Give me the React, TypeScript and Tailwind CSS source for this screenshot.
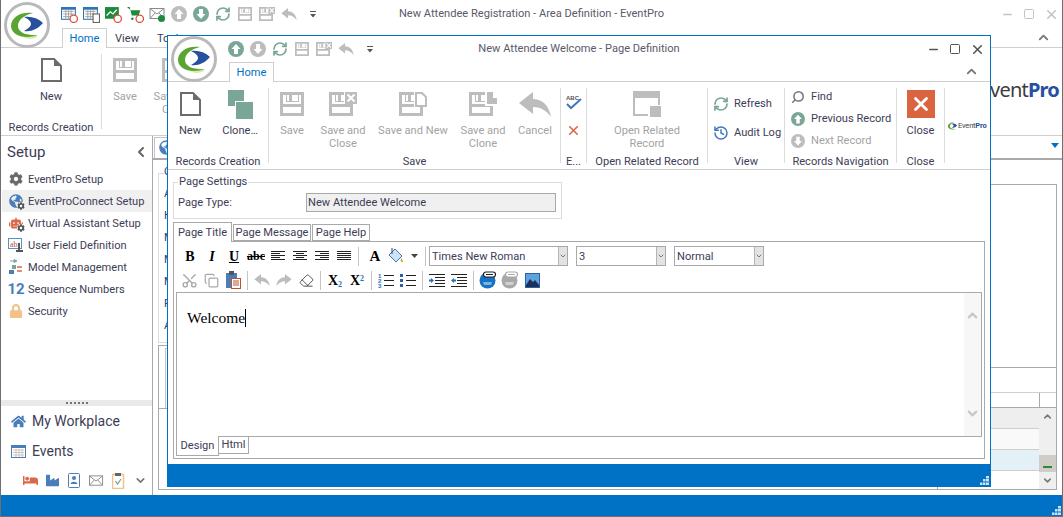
import type { ReactNode } from 'react';
import { ChevronDown, ChevronLeft, ChevronUp, Copy, Eraser, History, Minus, RefreshCw, Scissors, Search, Square, X } from 'lucide-react';
import { FaBed, FaCog, FaGlobeAmericas, FaHome, FaIndustry, FaLock, FaRobot } from 'react-icons/fa';

const TEAL = '#7aa698';
const GRAY = '#bdbdbd';

const Logo = () => (
  <svg width="46" height="46" viewBox="0 0 46 46">
    <circle cx="23" cy="23" r="21.5" fill="#fff" stroke="#b9b9b9" strokeWidth="3" />
    <path d="M15 32C21 38 28 38 33 35L33 33Z" fill="#dcebb0" />
    <path d="M29 11C16 9 7 16 7 24C7 33 20 38 34 33C24 34 14 31 14 24C14 18 20 13 29 11Z" fill="#5aa532" />
    <path d="M20 15C27 14 34 16 39 21C34 27 27 30 20 29C25 26 27 24 27 22C27 19 24 17 20 15Z" fill="#27509f" />
  </svg>
);

const ArrowCircle = ({ down, color, size = 16 }: { down?: boolean; color: string; size?: number }) => (
  <svg width={size} height={size} viewBox="0 0 16 16">
    <circle cx="8" cy="8" r="8" fill={color} />
    <path d="M8 3L12.5 8H10V13H6V8H3.5Z" fill="#fff" transform={down ? 'rotate(180 8 8)' : undefined} />
  </svg>
);

const Refresh = ({ size = 16 }: { size?: number }) => <RefreshCw size={size} color={TEAL} strokeWidth={2.6} />;

const Floppy = ({ size = 24, extra }: { size?: number; extra?: 'close' | 'new' | 'clone' }) => {
  const w = extra ? 28 : 24;
  return (
    <svg width={(size * w) / 24} height={size} viewBox={`0 0 ${w} 24`}>
      <path d="M0 0H24V24H0Z" fill={GRAY} />
      <path d="M3 3H21V12H3ZM3 15H21V21H3Z" fill="#fff" />
      <path d="M9 3H12V9H9Z" fill={GRAY} />
      <path d="M6 3H7V9H18V3H19V10H6Z" fill={GRAY} />
      {extra === 'close' && (
        <>
          <path d="M15 0H28V12H15Z" fill="#fff" />
          <path d="M16 0H28V12H16Z" fill={GRAY} />
          <path d="M18.5 2.5L25.5 9.5M25.5 2.5L18.5 9.5" stroke="#fff" strokeWidth="2" />
        </>
      )}
      {extra === 'new' && (
        <>
          <path d="M15 0H28V15H15Z" fill="#fff" />
          <path d="M17 1H23L27 5V14H17Z" fill="#fff" stroke={GRAY} strokeWidth="2" />
        </>
      )}
      {extra === 'clone' && (
        <>
          <path d="M16 0H24V6H29V14H16Z" fill="#fff" />
          <path d="M18 0H24V6H28V12H18Z" fill={GRAY} />
        </>
      )}
    </svg>
  );
};

const UndoArrow = ({ w = 16, h = 12, color = GRAY, flip }: { w?: number; h?: number; color?: string; flip?: boolean }) => (
  <svg width={w} height={h} viewBox="0 0 32 25" className={flip ? '-scale-x-100' : ''}>
    <path d="M0 11L14 0V7C23 7 30 13 32 25C27 18 21 15 14 15V22Z" fill={color} />
  </svg>
);

const QatDrop = () => (
  <svg width="8" height="8" viewBox="0 0 8 8">
    <path d="M1 1H7V2H1ZM1 4H7L4 7.5Z" fill="#555" />
  </svg>
);

const NewDoc = () => (
  <svg width="21" height="24" viewBox="0 0 21 24">
    <path d="M1 1H13L20 8V23H1Z" fill="#fff" stroke="#6c6c6c" strokeWidth="2" />
    <path d="M13 1V8H20Z" fill="#6c6c6c" />
  </svg>
);

const CloneIcon = () => (
  <svg width="25" height="29" viewBox="0 0 25 29">
    <rect x="0" y="0" width="16" height="16" fill={TEAL} />
    <rect x="7" y="11" width="18" height="18" fill="#fff" />
    <rect x="8" y="12" width="17" height="17" fill={TEAL} />
  </svg>
);

const RibbonButton = ({ icon, label, w, off }: { icon: ReactNode; label: ReactNode; w: number; off?: boolean }) => (
  <div className={`flex flex-col items-center text-center leading-[13px] whitespace-nowrap ${off ? 'text-[#a3a3a3]' : ''}`} style={{ width: w }}>
    <div className="h-[28px] flex items-center justify-center">{icon}</div>
    <div className="mt-[6px]">{label}</div>
  </div>
);

const Group = ({ label, w, children }: { label: string; w: number; children?: ReactNode }) => (
  <div className="flex flex-col h-[87px] shrink-0" style={{ width: w }}>
    <div className="flex h-[72px] pt-[8px]">{children}</div>
    <div className="h-[14px] leading-[16px] text-center whitespace-nowrap">{label}</div>
  </div>
);

const Divider = () => <div className="w-px h-[75px] mt-[6px] bg-[#dcdcdc] shrink-0" />;

const SmallRow = ({ icon, label, off }: { icon: ReactNode; label: string; off?: boolean }) => (
  <div className={`flex items-center h-[22px] whitespace-nowrap ${off ? 'text-[#a3a3a3]' : ''}`}>
    <div className="w-[26px] flex justify-center shrink-0">{icon}</div>
    {label}
  </div>
);

const Lines = ({ rows }: { rows: [number, number][] }) => (
  <svg width="14" height="12" viewBox="0 0 14 12">
    {rows.map(([a, b], i) => (
      <rect key={i} x={a} y={i * 2 + 1} width={b - a} height="1" fill="#222" />
    ))}
  </svg>
);

const Tool = ({ children, w = 22 }: { children: ReactNode; w?: number }) => (
  <div className="h-[22px] flex items-center justify-center shrink-0" style={{ width: w }}>
    {children}
  </div>
);

const Sep = () => <div className="w-px h-[19px] mx-[3px] bg-[#c4c4c4] shrink-0" />;

const Combo = ({ text, w, cls }: { text: string; w: number; cls?: string }) => (
  <div className={`h-[20px] flex border border-[#a9a9a9] shrink-0 ${cls ?? ''}`} style={{ width: w }}>
    <div className="flex-1 pl-[2px] leading-[20px] whitespace-nowrap">{text}</div>
    <div className="w-[9px] bg-[#e3e3e3] border-l border-[#b5b5b5] flex items-center justify-center">
      <ChevronDown size={10} color="#6d7f78" strokeWidth={3} />
    </div>
  </div>
);

const ListIcon = ({ numbered, indent, out }: { numbered?: boolean; indent?: boolean; out?: boolean }) => (
  <svg width="16" height="15" viewBox="0 0 16 15">
    {indent || out ? (
      <>
        <rect x="0" y="1" width="16" height="1" fill="#222" />
        <rect x="6" y="4" width="10" height="1" fill="#222" />
        <rect x="6" y="7" width="10" height="1" fill="#222" />
        <rect x="6" y="10" width="10" height="1" fill="#222" />
        <rect x="0" y="13" width="16" height="1" fill="#222" />
        <path d={out ? 'M0 7.5L3 5V6.5H5V8.5H3V10Z' : 'M5 7.5L2 5V6.5H0V8.5H2V10Z'} fill="#2a6fb5" />
      </>
    ) : (
      <>
        <rect x="6" y="2" width="10" height="1" fill="#222" />
        <rect x="6" y="7" width="10" height="1" fill="#222" />
        <rect x="6" y="12" width="10" height="1" fill="#222" />
        {numbered ? (
          <g fontSize="6" fontWeight="700" fill="#2a6fb5" fontFamily="Liberation Sans, sans-serif">
            <text x="0" y="5">1</text>
            <text x="0" y="10">2</text>
            <text x="0" y="15">3</text>
          </g>
        ) : (
          <>
            <rect x="0" y="1" width="3" height="3" fill="#2a5fa5" />
            <rect x="0" y="6" width="3" height="3" fill="#2a5fa5" />
            <rect x="0" y="11" width="3" height="3" fill="#2a5fa5" />
          </>
        )}
      </>
    )}
  </svg>
);

const Grip = () => (
  <svg width="9" height="9" viewBox="0 0 9 9">
    <path d="M6 0H9V2.5H6ZM3 3H5.5V5.5H3ZM6 3H9V5.5H6ZM0 6.5H2.5V9H0ZM3 6.5H5.5V9H3ZM6 6.5H9V9H6Z" fill="#cfe0ee" />
  </svg>
);

const SmallLogo = () => (
  <div className="flex items-center">
    <svg width="11" height="10" viewBox="4 6 38 34">
      <path d="M29 11C16 9 7 16 7 24C7 33 20 38 34 33C24 34 14 31 14 24C14 18 20 13 29 11Z" fill="#5aa532" />
      <path d="M20 15C27 14 34 16 39 21C34 27 27 30 20 29C25 26 27 24 27 22C27 19 24 17 20 15Z" fill="#27509f" />
    </svg>
    <span className="text-[7.5px] leading-none text-[#444] tracking-[-0.2px]">
      Event<b className="text-[#27509f]">Pro</b>
    </span>
  </div>
);

const ClockBadge = () => <circle cx="12" cy="12" r="3.5" fill="#fff" stroke="#d9533b" strokeWidth="1.2" />;

const CalClock = () => (
  <svg width="17" height="17" viewBox="0 0 16 16">
    <rect x="0.5" y="1.5" width="13" height="11" fill="#fff" stroke="#2e75b6" />
    <rect x="0" y="1" width="14" height="2.5" fill="#2e75b6" />
    <path d="M2 5H12M2 7.5H12M2 10H12M4.5 4V12M7 4V12M9.5 4V12" stroke="#9a9a9a" strokeWidth="0.8" />
    <ClockBadge />
  </svg>
);

const TableDoc = () => (
  <svg width="17" height="17" viewBox="0 0 16 16">
    <rect x="0.5" y="1.5" width="13" height="11" fill="#fff" stroke="#2e75b6" />
    <rect x="0" y="1" width="14" height="2.5" fill="#2e75b6" />
    <path d="M2 5H12M2 7.5H12M2 10H12M4.5 4V12M7 4V12M9.5 4V12" stroke="#9a9a9a" strokeWidth="0.8" />
    <rect x="9.5" y="7.5" width="6" height="8" fill="#fff" stroke="#666" />
  </svg>
);

const ChartClock = () => (
  <svg width="17" height="17" viewBox="0 0 16 16">
    <rect x="0" y="1" width="13" height="11" fill="#1e8a3c" />
    <path d="M1.5 9L5 5.5L7.5 7.5L11 3.5" stroke="#fff" fill="none" strokeWidth="1.2" />
    <ClockBadge />
  </svg>
);

const CartClock = () => (
  <svg width="17" height="17" viewBox="0 0 16 16">
    <path d="M0 1H2.5L4.5 9H11L12.5 4H3.5Z" fill="#1e8a3c" />
    <circle cx="5" cy="12" r="1.2" fill="#1e8a3c" />
    <ClockBadge />
  </svg>
);

const Mail = ({ badge, w = 15, color = '#8a8a8a' }: { badge?: boolean; w?: number; color?: string }) => (
  <svg width={w + 2} height="16" viewBox="0 0 16 16">
    <rect x="0.5" y="2.5" width="14" height="10" fill="#fff" stroke={color} />
    <path d="M1 3L7.5 8L14 3M1 12L5.5 7M14 12L9.5 7" fill="none" stroke={color} />
    {badge && <circle cx="12" cy="12.5" r="3.5" fill="#1e8a3c" />}
  </svg>
);

const Spell = () => (
  <svg width="18" height="16" viewBox="0 0 18 16">
    <text x="1" y="6" fontSize="6" fontWeight="700" fill="#555" fontFamily="Liberation Sans, sans-serif">ABC</text>
    <path d="M2 10L6 14L16 5" fill="none" stroke="#3f79bd" strokeWidth="2" />
  </svg>
);

const OpenRelated = () => (
  <svg width="28" height="26" viewBox="0 0 28 26">
    <rect x="1" y="1" width="25" height="23" fill="#fff" stroke={GRAY} strokeWidth="2" />
    <rect x="0" y="0" width="27" height="7" fill={GRAY} />
    <rect x="15" y="14" width="13" height="12" fill="#fff" />
    <rect x="17" y="15" width="11" height="11" fill={GRAY} />
  </svg>
);

const Paste = () => (
  <svg width="16" height="18" viewBox="0 0 16 18">
    <rect x="1" y="2" width="11" height="15" fill="#4a7ebb" />
    <rect x="4" y="0" width="5" height="4" fill="#555" />
    <rect x="6.5" y="7.5" width="9" height="10" fill="#fff" stroke="#c0532f" />
    <path d="M8 10H14M8 12H14M8 14H14" stroke="#c0532f" />
  </svg>
);

const FontColor = () => (
  <span className="font-['Liberation_Serif',serif] font-bold text-[15px] text-black leading-none">A</span>
);

const FillBucket = () => (
  <svg width="16" height="16" viewBox="0 0 16 16">
    <path d="M7 1L14 8L8 14L1 7Z" fill="#cfe3f5" stroke="#3f79bd" />
    <path d="M13 10C15 12 15.5 14 14 14.5C12.5 14 12.5 12 13 10Z" fill="#d9a23b" />
    <path d="M4 0V6" stroke="#444" />
  </svg>
);

const LinkGlobe = ({ color, ring }: { color: string; ring: string }) => (
  <svg width="18" height="18" viewBox="0 0 18 18">
    <circle cx="8.5" cy="9.5" r="8" fill={color} />
    <path d="M4 11H13L12 14H5Z" fill="#fff" opacity="0.45" />
    <rect x="4.500" y="1" width="12" height="5" rx="2.500" fill="#fff" stroke={ring} strokeWidth="1.200" />
    <path d="M7 3.500H14" stroke={ring} strokeWidth="1" />
  </svg>
);

const Picture = () => (
  <svg width="15" height="15" viewBox="0 0 15 15">
    <rect x="0.5" y="0.5" width="14" height="14" fill="#5da3dd" stroke="#2e5f9e" />
    <path d="M1 12L5 6L8 9L10 7L14 12V14H1Z" fill="#1d2f5c" />
  </svg>
);

const PageIcon = ({ children }: { children: ReactNode }) => <div className="w-[20px] flex justify-center mr-[2px] shrink-0">{children}</div>;

const WithGear = ({ children }: { children: ReactNode }) => (
  <span className="relative inline-flex">
    {children}
    <FaCog size={8} color="#555" className="absolute -right-[2px] -bottom-[2px] bg-white rounded-full" />
  </span>
);

const UserField = () => (
  <svg width="16" height="16" viewBox="0 0 16 16">
    <rect x="0.5" y="1.5" width="13" height="10" fill="#fff" stroke="#5b8fc7" />
    <text x="2" y="9.5" fontSize="8" fill="#b5532f" fontFamily="Liberation Serif, serif">ab</text>
    <path d="M11 6V13M8 14H15" stroke="#555" strokeWidth="2" />
  </svg>
);

const ModelIcon = () => (
  <svg width="16" height="16" viewBox="0 0 16 16">
    <path d="M2 2H8M6 0.5L9 2L6 3.5Z" fill="#7aa698" stroke="#7aa698" />
    <rect x="1" y="11" width="5" height="4" fill="#4a7ebb" />
    <rect x="4" y="6" width="4" height="4" fill="#7aa698" />
    <path d="M9 8H14M9 12H14" stroke="#d9694a" strokeWidth="1.5" />
  </svg>
);

const sideItems: { icon: ReactNode; label: string; active?: boolean }[] = [
  { icon: <FaCog size={14} color="#6a6a6a" />, label: 'EventPro Setup' },
  { icon: <WithGear><FaGlobeAmericas size={14} color="#4a7ebb" /></WithGear>, label: 'EventProConnect Setup', active: true },
  { icon: <WithGear><FaRobot size={14} color="#d9694a" /></WithGear>, label: 'Virtual Assistant Setup' },
  { icon: <UserField />, label: 'User Field Definition' },
  { icon: <ModelIcon />, label: 'Model Management' },
  { icon: <span className="text-[15px] font-bold leading-none text-[#4a7ebb]">12</span>, label: 'Sequence Numbers' },
  { icon: <FaLock size={14} color="#f3c28c" />, label: 'Security' },
];

const leftLabels = ['C', 'A', 'H', 'M', 'M', 'M', 'F', 'A'];

export default function App() {
  return (
    <div className="relative w-[1063px] h-[517px] overflow-hidden bg-white border-x border-b border-[#6f6f6f] flex flex-col text-[#3d3d56] text-[11.1px] font-['Roboto','Liberation_Sans',sans-serif]">
      {/* main window title */}
      <div className="h-[28px] shrink-0 grid grid-cols-[360px_1fr_360px] items-center">
        <div className="flex items-center pl-[57px]">
          <Tool><CalClock /></Tool>
          <Tool><TableDoc /></Tool>
          <Tool><ChartClock /></Tool>
          <Tool><CartClock /></Tool>
          <Tool><Mail badge /></Tool>
          <Tool><ArrowCircle color={GRAY} /></Tool>
          <Tool><ArrowCircle down color={TEAL} /></Tool>
          <Tool><Refresh /></Tool>
          <Tool><Floppy size={14} /></Tool>
          <Tool><Floppy size={14} extra="close" /></Tool>
          <Tool><UndoArrow /></Tool>
          <Tool w={26}><QatDrop /></Tool>
        </div>
        <div className="whitespace-nowrap text-center pt-px text-[#5a5a6a]">New Attendee Registration - Area Definition - EventPro</div>
        <div className="flex justify-end text-[#c4c4c4]">
          <Tool><Minus size={13} strokeWidth={2.5} /></Tool>
          <Tool><Square size={12} strokeWidth={2} /></Tool>
          <Tool><X size={15} strokeWidth={2.5} /></Tool>
        </div>
      </div>

      {/* main window tabs */}
      <div className="h-[20px] shrink-0 flex border-b border-[#cfcfcf] pl-[61px]">
        <div className="w-[45px] h-[20px] border-x border-t border-[#cfcfcf] bg-white text-center leading-[20px] text-[#0072c6]">Home</div>
        <div className="w-[40px] text-center leading-[22px]">View</div>
        <div className="ml-[10px] leading-[22px]">Tools</div>
        <div className="ml-auto pr-[11px] pt-[2px]"><ChevronUp size={15} color="#777" strokeWidth={3} /></div>
      </div>

      {/* main window ribbon */}
      <div className="h-[88px] shrink-0 flex border-b border-[#cfcfcf]">
        <Group label="Records Creation" w={100}>
          <RibbonButton icon={<NewDoc />} label="New" w={100} />
        </Group>
        <Divider />
        <Group label="" w={120}>
          <RibbonButton off icon={<Floppy />} label="Save" w={46} />
          <RibbonButton off icon={<Floppy extra="close" />} label={<>Save and<br />Close</>} w={56} />
        </Group>
        <div className="ml-auto self-center pr-[3px] -mt-[3px] text-[20px] tracking-[-0.8px] text-[#3d3d3d] font-['Noto_Sans',sans-serif]">
          Event<b className="text-[#27509f]">Pro</b>
        </div>
      </div>

      {/* main window body */}
      <div className="flex-1 flex min-h-0">
        <div className="w-[152px] shrink-0 border-r border-[#a9a9a9] flex flex-col">
          <div className="h-[32px] shrink-0 flex items-center justify-between pl-[6px] pr-[3px] text-[15px]">
            Setup
            <ChevronLeft size={16} color="#666" strokeWidth={3} />
          </div>
          {sideItems.map((item) => (
            <div key={item.label} className={`h-[22px] shrink-0 ml-px flex items-center pl-[4px] whitespace-nowrap ${item.active ? 'bg-[#f0f0f0]' : ''}`}>
              <PageIcon>{item.icon}</PageIcon>
              <span className="pt-[2px]">{item.label}</span>
            </div>
          ))}
          <div className="flex-1" />
          <div className="h-[6px] shrink-0 bg-[#e9e9e9] flex items-center justify-center gap-[2px]">
            {[0, 1, 2, 3, 4, 5].map((i) => (
              <span key={i} className="w-[2px] h-[2px] bg-[#777]" />
            ))}
          </div>
          <div className="h-[30px] shrink-0 flex items-center pl-[10px] pt-px gap-[6px] text-[14px]">
            <FaHome size={15} color="#4a7ebb" />
            My Workplace
          </div>
          <div className="h-[30px] shrink-0 flex items-center pl-[10px] pt-px gap-[6px] text-[14px]">
            <svg width="15" height="13" viewBox="0 0 15 13">
              <rect x="0.5" y="0.5" width="14" height="12" fill="#fff" stroke="#4a7ebb" />
              <rect x="0" y="0" width="15" height="3" fill="#4a7ebb" />
              <path d="M2 5H13M2 7.5H13M2 10H13M5 4V12M8 4V12M11 4V12" stroke="#c9b9a9" strokeWidth="0.8" />
            </svg>
            Events
          </div>
          <div className="h-[29px] shrink-0 flex items-center pl-[18px]">
            <Tool><FaBed size={15} color="#d9694a" /></Tool>
            <Tool><FaIndustry size={13} color="#4a7ebb" /></Tool>
            <Tool>
              <svg width="13" height="15" viewBox="0 0 13 15">
                <rect x="0.5" y="0.5" width="11" height="14" rx="1" fill="#fff" stroke="#4a7ebb" />
                <circle cx="6" cy="5" r="2" fill="#4a7ebb" />
                <path d="M2.5 11C3 8 9 8 9.500 11Z" fill="#4a7ebb" />
              </svg>
            </Tool>
            <Tool><Mail w={13} /></Tool>
            <Tool>
              <svg width="13" height="16" viewBox="0 0 13 16">
                <rect x="0.5" y="1.5" width="11" height="14" fill="#fff" stroke="#f3c28c" strokeWidth="1.500" />
                <rect x="3" y="0" width="6" height="3" fill="#666" />
                <path d="M3.500 8L5.500 11L9 6" fill="none" stroke="#7aa698" strokeWidth="1.300" />
              </svg>
            </Tool>
            <Tool><ChevronDown size={13} color="#777" strokeWidth={3} /></Tool>
          </div>
        </div>

        <div className="flex-1 min-w-0 flex flex-col">
          <div className="h-[22px] shrink-0 flex items-end justify-between pl-[1px] pr-[3px]">
            <div className="w-[60px] h-[21px] border-x border-t border-[#c4c4c4] pl-[4px] pt-[2px]">
              <FaGlobeAmericas size={15} color="#4a7ebb" />
            </div>
            <svg width="8" height="5" viewBox="0 0 8 5" className="mb-[10px]">
              <path d="M0 0H8L4 5Z" fill="#0072c6" />
            </svg>
          </div>
          <div className="h-[2px] shrink-0 bg-[#a9a9a9]" />
          <div className="flex-1 min-h-0 flex justify-between mx-[5px] mb-[5px] border-b border-[#a9a9a9]">
            <div className="w-[100px] flex flex-col pt-[13px]">
              <div className="h-[170px] shrink-0 border-l border-t border-b border-[#dcdcdc] pl-[5px] text-[#2e3a78]">
                <div className="-mt-[13px] bg-white">
                  {leftLabels.map((c, i) => (
                    <div key={i} className="h-[22px] leading-[22px]">{c}</div>
                  ))}
                </div>
              </div>
              <div className="flex-1 mt-[2px] border-l border-t border-[#a9a9a9] pl-[6px] pt-[2px] flex flex-col">
                <div className="h-[60px] border-l border-t border-[#c4c4c4]" />
                <div className="flex-1 -ml-[6px] border-t border-[#a9a9a9]" />
              </div>
            </div>
            <div className="w-[120px] mt-[24px] border-x border-t border-[#a9a9a9] flex flex-col">
              <div className="h-[183px] shrink-0 border-b border-[#a9a9a9]" />
              <div className="h-[25px] shrink-0 border-b border-[#cfcfcf]" />
              <div className="h-[15px] shrink-0 border-b border-[#a9a9a9] flex justify-end">
                <div className="w-[17px] border-l border-[#a9a9a9]" />
              </div>
              <div className="flex-1 flex min-h-0">
                <div className="flex-1 flex flex-col">
                  <div className="h-[21px] bg-[#eeeeee] border-b border-[#cfcfcf]" />
                  <div className="h-[21px] bg-[#f9f9f9] border-b border-[#cfcfcf]" />
                  <div className="h-[21px] bg-[#e3f0f6] border-b border-[#cfcfcf]" />
                </div>
                <div className="w-[17px] bg-[#efefef] flex flex-col items-center">
                  <div className="h-[18px] flex items-center"><ChevronUp size={11} color="#6d7f78" strokeWidth={3.5} /></div>
                  <div className="h-[30px]" />
                  <div className="w-full h-[17px] bg-[#d0cdc9] flex items-end justify-center pb-[4px]">
                    <div className="w-[9px] h-[2px] bg-[#2f8a2f]" />
                  </div>
                  <div className="h-[17px] flex items-center"><ChevronDown size={11} color="#6d7f78" strokeWidth={3.5} /></div>
                </div>
              </div>
            </div>
          </div>
        </div>
      </div>

      {/* status bar */}
      <div className="h-[21px] shrink-0 bg-[#0072c6] flex items-end justify-end pr-[1px] pb-[1px]">
        <Grip />
      </div>

      <div className="absolute left-[3px] top-[2px]"><Logo /></div>

      {/* dialog */}
      <div className="absolute left-[166px] top-[35px] w-[824px] h-[452px] bg-white border border-[#0072c6] flex flex-col">
        <div className="absolute left-[3px] top-0"><Logo /></div>
        <div className="h-[26px] shrink-0 grid grid-cols-[300px_1fr_300px] items-center">
          <div className="flex items-center pl-[57px]">
            <Tool><ArrowCircle color={TEAL} /></Tool>
            <Tool><ArrowCircle down color={GRAY} /></Tool>
            <Tool><Refresh /></Tool>
            <Tool><Floppy size={14} /></Tool>
            <Tool><Floppy size={14} extra="close" /></Tool>
            <Tool><UndoArrow /></Tool>
            <Tool w={26}><QatDrop /></Tool>
          </div>
          <div className="whitespace-nowrap text-center text-[#5a5a6a]">New Attendee Welcome - Page Definition</div>
          <div className="flex justify-end pr-[2px] text-[#555]">
            <Tool><Minus size={13} strokeWidth={2.5} /></Tool>
            <Tool><Square size={12} strokeWidth={2} /></Tool>
            <Tool><X size={15} strokeWidth={2.5} /></Tool>
          </div>
        </div>
        <div className="h-[20px] shrink-0 flex border-b border-[#cfcfcf] pl-[61px]">
          <div className="w-[45px] h-[20px] border-x border-t border-[#cfcfcf] bg-white text-center leading-[20px] text-[#0072c6]">Home</div>
          <div className="ml-auto pr-[11px] pt-[2px]"><ChevronUp size={15} color="#777" strokeWidth={3} /></div>
        </div>

        {/* dialog ribbon */}
        <div className="h-[88px] shrink-0 flex border-b border-[#cfcfcf]">
          <Group label="Records Creation" w={100}>
            <RibbonButton icon={<NewDoc />} label="New" w={44} />
            <RibbonButton icon={<CloneIcon />} label="Clone…" w={56} />
          </Group>
          <Divider />
          <Group label="Save" w={291}>
            <RibbonButton off icon={<Floppy />} label="Save" w={46} />
            <RibbonButton off icon={<Floppy extra="close" />} label={<>Save and<br />Close</>} w={56} />
            <RibbonButton off icon={<Floppy extra="new" />} label="Save and New" w={84} />
            <RibbonButton off icon={<Floppy extra="clone" />} label={<>Save and<br />Clone</>} w={56} />
            <RibbonButton off icon={<UndoArrow w={32} h={25} />} label="Cancel" w={48} />
          </Group>
          <Divider />
          <Group label="E..." w={25}>
            <div className="w-full flex flex-col items-center gap-[13px] pt-[4px]">
              <Spell />
              <X size={15} color="#d9694a" strokeWidth={2.5} />
            </div>
          </Group>
          <Divider />
          <Group label="Open Related Record" w={120}>
            <RibbonButton off icon={<OpenRelated />} label={<>Open Related<br />Record</>} w={120} />
          </Group>
          <Divider />
          <Group label="View" w={76}>
            <div className="flex flex-col gap-[7px] pt-[3px] w-full">
              <SmallRow icon={<Refresh />} label="Refresh" />
              <SmallRow icon={<History size={16} color="#3f79bd" strokeWidth={2.2} />} label="Audit Log" />
            </div>
          </Group>
          <Divider />
          <Group label="Records Navigation" w={111}>
            <div className="flex flex-col -mt-[4px] w-full">
              <SmallRow icon={<Search size={14} color="#777" strokeWidth={2.6} className="-scale-x-100" />} label="Find" />
              <SmallRow icon={<ArrowCircle color={TEAL} size={14} />} label="Previous Record" />
              <SmallRow off icon={<ArrowCircle down color={GRAY} size={14} />} label="Next Record" />
            </div>
          </Group>
          <Divider />
          <Group label="Close" w={47}>
            <RibbonButton
              icon={
                <div className="w-[28px] h-[28px] bg-[#d9643f] flex items-center justify-center">
                  <X size={22} color="#fff" strokeWidth={3} />
                </div>
              }
              label="Close"
              w={47}
            />
          </Group>
          <Divider />
          <div className="flex-1 pl-[2px] pt-[39px]"><SmallLogo /></div>
        </div>

        {/* page settings */}
        <div className="flex-1 min-h-0 px-[5px] pt-[5px]">
          <fieldset className="w-[389px] h-[44px] border border-[#dcdcdc]">
            <legend className="ml-[4px] px-[1px] leading-[14px]">Page Settings</legend>
            <div className="flex items-center pl-[4px] mt-[4px]">
              <div className="w-[128px] pt-px">Page Type:</div>
              <div className="w-[250px] h-[19px] bg-[#f0f0f0] border border-[#a9a9a9] pl-[1px] leading-[18px]">New Attendee Welcome</div>
            </div>
          </fieldset>

          <div className="flex items-end h-[20px] mt-[3px] -mb-px relative whitespace-nowrap">
            <div className="w-[59px] h-[20px] bg-white border-x border-t border-[#a9a9a9] text-center leading-[19px]">Page Title</div>
            <div className="w-[78px] h-[17px] ml-px mb-px border border-[#a9a9a9] text-center leading-[16px]">Page Message</div>
            <div className="w-[58px] h-[17px] ml-px mb-px border border-[#a9a9a9] text-center leading-[16px]">Page Help</div>
          </div>

          <div className="w-[812px] h-[218px] border border-[#a9a9a9] pl-[2px] pt-[3px]">
            <div className="flex items-center h-[22px] pl-[3px]">
              <Tool><span className="font-['Liberation_Serif',serif] font-bold text-[14px] text-black">B</span></Tool>
              <Tool><span className="font-['Liberation_Serif',serif] font-bold italic text-[14px] text-black">I</span></Tool>
              <Tool><span className="font-['Liberation_Serif',serif] font-bold underline text-[14px] text-black">U</span></Tool>
              <Tool><span className="font-['Liberation_Serif',serif] font-bold line-through text-[12px] text-black">abc</span></Tool>
              <Tool><Lines rows={[[0, 14], [0, 9], [0, 14], [0, 9], [0, 14]]} /></Tool>
              <Tool><Lines rows={[[0, 14], [3, 11], [0, 14], [3, 11], [0, 14]]} /></Tool>
              <Tool><Lines rows={[[0, 14], [5, 14], [0, 14], [5, 14], [0, 14]]} /></Tool>
              <Tool><Lines rows={[[0, 14], [0, 14], [0, 14], [0, 14], [0, 14]]} /></Tool>
              <Sep />
              <div className="w-[2px]" />
              <Tool><FontColor /></Tool>
              <Tool w={20}><FillBucket /></Tool>
              <Tool w={16}><svg width="7" height="4" viewBox="0 0 7 4"><path d="M0 0H7L3.500 4Z" fill="#444" /></svg></Tool>
              <Sep />
              <Combo text="Times New Roman" w={139} />
              <Combo text="3" w={90} cls="ml-[8px]" />
              <Combo text="Normal" w={90} cls="ml-[8px]" />
            </div>
            <div className="flex items-center h-[22px] mt-[2px] pl-[2px]">
              <Tool><Scissors size={17} color="#a9a9a9" strokeWidth={2} className="-rotate-90" /></Tool>
              <Tool><Copy size={15} color="#a9a9a9" strokeWidth={2} /></Tool>
              <Tool><Paste /></Tool>
              <Sep />
              <Tool><UndoArrow /></Tool>
              <Tool><UndoArrow flip /></Tool>
              <Tool><Eraser size={15} color="#555" strokeWidth={1.6} /></Tool>
              <Sep />
              <Tool>
                <span className="font-['Liberation_Serif',serif] font-bold text-[14px] text-black">X<sub className="text-[8px] text-[#2a6fb5]">2</sub></span>
              </Tool>
              <Tool>
                <span className="font-['Liberation_Serif',serif] font-bold text-[14px] text-black">X<sup className="text-[8px] text-[#2a6fb5]">2</sup></span>
              </Tool>
              <Sep />
              <Tool><ListIcon numbered /></Tool>
              <Tool><ListIcon /></Tool>
              <Sep />
              <Tool><ListIcon indent /></Tool>
              <Tool><ListIcon out /></Tool>
              <Sep />
              <Tool><LinkGlobe color="#1572c4" ring="#222" /></Tool>
              <Tool><LinkGlobe color="#a9a9a9" ring="#a9a9a9" /></Tool>
              <Tool><Picture /></Tool>
            </div>
            <div className="w-[806px] h-[145px] mt-px border border-[#a9a9a9] flex">
              <div className="flex-1 pl-[10px] pt-[15px]">
                <div className="flex items-center h-[19px] font-['Liberation_Serif',serif] text-[15.5px] text-black">
                  Welcome
                  <span className="w-px h-[18px] bg-black" />
                </div>
              </div>
              <div className="w-[17px] bg-[#f7f7f7] flex flex-col justify-between items-center py-[15px]">
                <ChevronUp size={15} color="#c8c8c8" strokeWidth={3.5} />
                <ChevronDown size={15} color="#c8c8c8" strokeWidth={3.5} />
              </div>
            </div>
            <div className="flex items-start -mt-px">
              <div className="w-[43px] h-[20px] bg-white border-x border-b border-[#a9a9a9] text-center leading-[20px]">Design</div>
              <div className="w-[31px] h-[18px] -ml-px border border-[#a9a9a9] text-center leading-[15px]">Html</div>
            </div>
          </div>
        </div>

        <div className="h-[22px] shrink-0 bg-[#0072c6] flex items-end justify-end pr-[1px] pb-[1px]">
          <Grip />
        </div>
      </div>
    </div>
  );
}
